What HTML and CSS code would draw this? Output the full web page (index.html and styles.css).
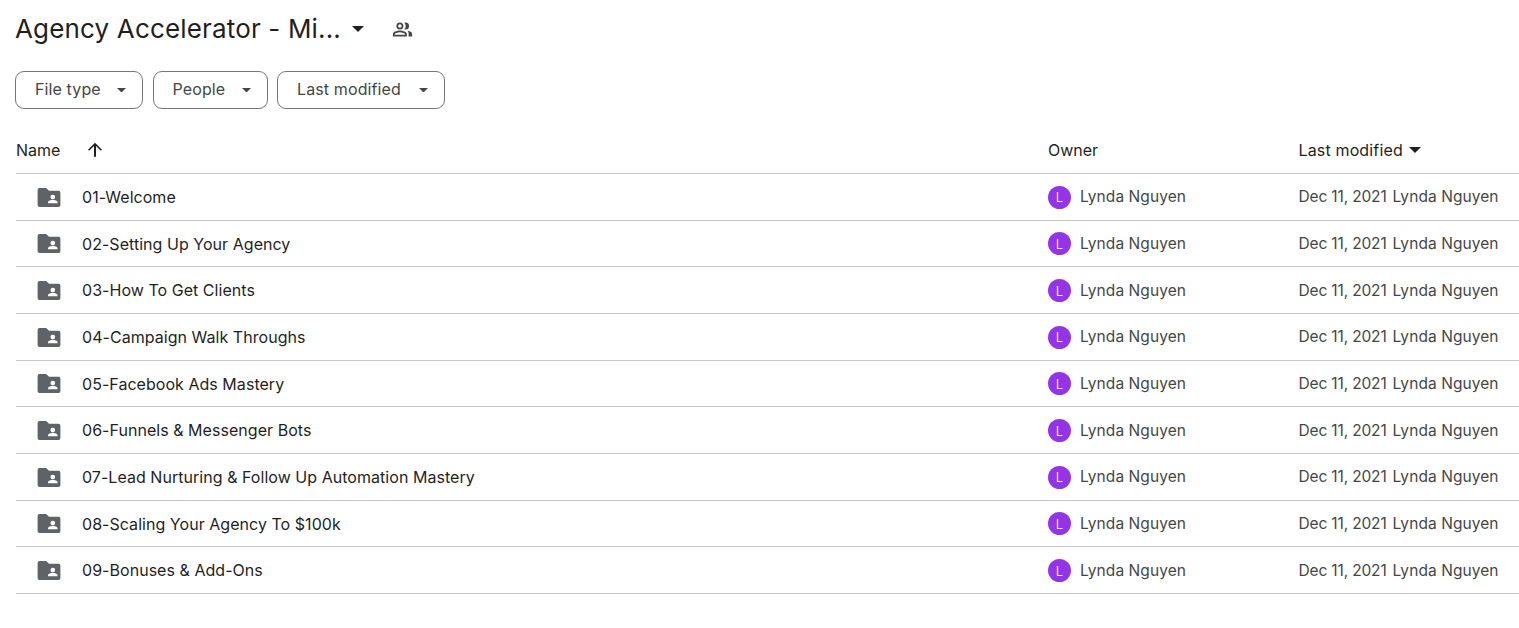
FILE: index.html
```html
<!DOCTYPE html>
<html lang="en">
<head>
<meta charset="utf-8">
<title>Agency Accelerator</title>
<link rel="stylesheet" href="styles.css">
</head>
<body>
<header class="title-bar">
  <h1 class="title">Agency Accelerator - Mi...</h1>
  <svg class="title-caret" viewBox="0 0 12 6"><path d="M0 0h12L6 6z"/></svg>
  <svg class="shared" viewBox="0 0 24 24"><path d="M9 12a4 4 0 1 0 0-8 4 4 0 0 0 0 8zm0-6a2 2 0 1 1 0 4 2 2 0 0 1 0-4zm0 7c-2.700 0-8 1.340-8 4v3h16v-3c0-2.660-5.300-4-8-4zm6 5H3v-1c.2-.72 3.300-2 6-2s5.800 1.280 6 2v1zm.5-6a4 4 0 0 0 0-8c-.47 0-.91.100-1.330.24a5.980 5.980 0 0 1 0 7.520c.42.140.860.240 1.330.240zm1.810 1.150C18.700 14.100 19 15.300 19 17v3h4v-3c0-2.100-3-3.400-5.690-3.850z"/></svg>
</header>
<div class="filters">
  <button class="chip chip-type"><span class="chip-label">File type</span><svg class="chip-caret" viewBox="0 0 10 5"><path d="M0 0h10L5 5z"/></svg></button>
  <button class="chip chip-people"><span class="chip-label">People</span><svg class="chip-caret" viewBox="0 0 10 5"><path d="M0 0h10L5 5z"/></svg></button>
  <button class="chip chip-mod"><span class="chip-label">Last modified</span><svg class="chip-caret" viewBox="0 0 10 5"><path d="M0 0h10L5 5z"/></svg></button>
</div>
<div class="table">
  <div class="row head">
    <div class="cell-name"><span class="head-name">Name</span><svg class="sort" viewBox="0 0 16 16"><path d="M8 1.500 1.800 7.700l1 1 4.300-4.300V14h1.800V4.400l4.300 4.300 1-1z"/></svg></div>
    <div class="cell-owner">Owner</div>
    <div class="cell-mod"><span class="head-mod">Last modified</span><svg class="head-caret" viewBox="0 0 12 6"><path d="M0 0h12L6 6z"/></svg></div>
  </div>
  <div class="row"><div class="cell-name"><svg class="folder" viewBox="0 0 24 20"><path d="M2 0h7l3 3h10a2 2 0 0 1 2 2v13a2 2 0 0 1-2 2H2a2 2 0 0 1-2-2V2a2 2 0 0 1 2-2zm14 7a2.500 2.500 0 1 0 0 5 2.500 2.500 0 0 0 0-5zm-5 9h10v-1c0-1.700-3.300-2.300-5-2.300s-5 .6-5 2.300z" fill-rule="evenodd"/></svg><span class="name">01-Welcome</span></div><div class="cell-owner"><span class="avatar">L</span><span class="person">Lynda Nguyen</span></div><div class="cell-mod"><span class="date">Dec 11, 2021</span><span class="person">Lynda Nguyen</span></div></div>
  <div class="row"><div class="cell-name"><svg class="folder" viewBox="0 0 24 20"><path d="M2 0h7l3 3h10a2 2 0 0 1 2 2v13a2 2 0 0 1-2 2H2a2 2 0 0 1-2-2V2a2 2 0 0 1 2-2zm14 7a2.500 2.500 0 1 0 0 5 2.500 2.500 0 0 0 0-5zm-5 9h10v-1c0-1.700-3.300-2.300-5-2.300s-5 .6-5 2.300z" fill-rule="evenodd"/></svg><span class="name">02-Setting Up Your Agency</span></div><div class="cell-owner"><span class="avatar">L</span><span class="person">Lynda Nguyen</span></div><div class="cell-mod"><span class="date">Dec 11, 2021</span><span class="person">Lynda Nguyen</span></div></div>
  <div class="row"><div class="cell-name"><svg class="folder" viewBox="0 0 24 20"><path d="M2 0h7l3 3h10a2 2 0 0 1 2 2v13a2 2 0 0 1-2 2H2a2 2 0 0 1-2-2V2a2 2 0 0 1 2-2zm14 7a2.500 2.500 0 1 0 0 5 2.500 2.500 0 0 0 0-5zm-5 9h10v-1c0-1.700-3.300-2.300-5-2.300s-5 .6-5 2.300z" fill-rule="evenodd"/></svg><span class="name">03-How To Get Clients</span></div><div class="cell-owner"><span class="avatar">L</span><span class="person">Lynda Nguyen</span></div><div class="cell-mod"><span class="date">Dec 11, 2021</span><span class="person">Lynda Nguyen</span></div></div>
  <div class="row"><div class="cell-name"><svg class="folder" viewBox="0 0 24 20"><path d="M2 0h7l3 3h10a2 2 0 0 1 2 2v13a2 2 0 0 1-2 2H2a2 2 0 0 1-2-2V2a2 2 0 0 1 2-2zm14 7a2.500 2.500 0 1 0 0 5 2.500 2.500 0 0 0 0-5zm-5 9h10v-1c0-1.700-3.300-2.300-5-2.300s-5 .6-5 2.300z" fill-rule="evenodd"/></svg><span class="name">04-Campaign Walk Throughs</span></div><div class="cell-owner"><span class="avatar">L</span><span class="person">Lynda Nguyen</span></div><div class="cell-mod"><span class="date">Dec 11, 2021</span><span class="person">Lynda Nguyen</span></div></div>
  <div class="row"><div class="cell-name"><svg class="folder" viewBox="0 0 24 20"><path d="M2 0h7l3 3h10a2 2 0 0 1 2 2v13a2 2 0 0 1-2 2H2a2 2 0 0 1-2-2V2a2 2 0 0 1 2-2zm14 7a2.500 2.500 0 1 0 0 5 2.500 2.500 0 0 0 0-5zm-5 9h10v-1c0-1.700-3.300-2.300-5-2.300s-5 .6-5 2.300z" fill-rule="evenodd"/></svg><span class="name">05-Facebook Ads Mastery</span></div><div class="cell-owner"><span class="avatar">L</span><span class="person">Lynda Nguyen</span></div><div class="cell-mod"><span class="date">Dec 11, 2021</span><span class="person">Lynda Nguyen</span></div></div>
  <div class="row"><div class="cell-name"><svg class="folder" viewBox="0 0 24 20"><path d="M2 0h7l3 3h10a2 2 0 0 1 2 2v13a2 2 0 0 1-2 2H2a2 2 0 0 1-2-2V2a2 2 0 0 1 2-2zm14 7a2.500 2.500 0 1 0 0 5 2.500 2.500 0 0 0 0-5zm-5 9h10v-1c0-1.700-3.300-2.300-5-2.300s-5 .6-5 2.300z" fill-rule="evenodd"/></svg><span class="name">06-Funnels &amp; Messenger Bots</span></div><div class="cell-owner"><span class="avatar">L</span><span class="person">Lynda Nguyen</span></div><div class="cell-mod"><span class="date">Dec 11, 2021</span><span class="person">Lynda Nguyen</span></div></div>
  <div class="row"><div class="cell-name"><svg class="folder" viewBox="0 0 24 20"><path d="M2 0h7l3 3h10a2 2 0 0 1 2 2v13a2 2 0 0 1-2 2H2a2 2 0 0 1-2-2V2a2 2 0 0 1 2-2zm14 7a2.500 2.500 0 1 0 0 5 2.500 2.500 0 0 0 0-5zm-5 9h10v-1c0-1.700-3.300-2.300-5-2.300s-5 .6-5 2.300z" fill-rule="evenodd"/></svg><span class="name">07-Lead Nurturing &amp; Follow Up Automation Mastery</span></div><div class="cell-owner"><span class="avatar">L</span><span class="person">Lynda Nguyen</span></div><div class="cell-mod"><span class="date">Dec 11, 2021</span><span class="person">Lynda Nguyen</span></div></div>
  <div class="row"><div class="cell-name"><svg class="folder" viewBox="0 0 24 20"><path d="M2 0h7l3 3h10a2 2 0 0 1 2 2v13a2 2 0 0 1-2 2H2a2 2 0 0 1-2-2V2a2 2 0 0 1 2-2zm14 7a2.500 2.500 0 1 0 0 5 2.500 2.500 0 0 0 0-5zm-5 9h10v-1c0-1.700-3.300-2.300-5-2.300s-5 .6-5 2.300z" fill-rule="evenodd"/></svg><span class="name">08-Scaling Your Agency To $100k</span></div><div class="cell-owner"><span class="avatar">L</span><span class="person">Lynda Nguyen</span></div><div class="cell-mod"><span class="date">Dec 11, 2021</span><span class="person">Lynda Nguyen</span></div></div>
  <div class="row"><div class="cell-name"><svg class="folder" viewBox="0 0 24 20"><path d="M2 0h7l3 3h10a2 2 0 0 1 2 2v13a2 2 0 0 1-2 2H2a2 2 0 0 1-2-2V2a2 2 0 0 1 2-2zm14 7a2.500 2.500 0 1 0 0 5 2.500 2.500 0 0 0 0-5zm-5 9h10v-1c0-1.700-3.300-2.300-5-2.300s-5 .6-5 2.300z" fill-rule="evenodd"/></svg><span class="name">09-Bonuses &amp; Add-Ons</span></div><div class="cell-owner"><span class="avatar">L</span><span class="person">Lynda Nguyen</span></div><div class="cell-mod"><span class="date">Dec 11, 2021</span><span class="person">Lynda Nguyen</span></div></div>
</div>
</body>
</html>
```
FILE: styles.css
```css
* { box-sizing: border-box; }
html, body { margin: 0; padding: 0; background: #fff; }
body {
  padding-left: 16px;
  font-family: Inter, "Noto Sans", sans-serif;
  color: #1f1f1f;
  overflow: hidden;
  height: 628px;
}
.title-bar { display: flex; align-items: center; height: 58px; margin-left: -1px; }
.title { margin: 0; font-size: 26px; font-weight: 400; line-height: 34px; letter-spacing: .16px; width: 337px; white-space: nowrap; color: #1f1f1f; }
.title-caret { width: 12px; height: 6px; fill: #1f1f1f; }
.shared { width: 21px; height: 21px; margin-left: 28px; fill: #444746; }
.filters { display: flex; gap: 9.500px; margin: 13px 0 0 -1px; }
.chip {
  display: flex; align-items: center; justify-content: space-between;
  height: 38px; padding: 0 16px 0 19px;
  border: 1px solid #747775; border-radius: 9px; background: #fff;
  font: 400 16px Inter, sans-serif; color: #444746;
}
.chip-label { margin-bottom: 2px; letter-spacing: .12px; }
.chip-type { width: 128px; }
.chip-people { width: 115px; }
.chip-mod { width: 168px; }
.chip-caret { width: 9px; height: 4.500px; fill: #444746; }
.table { margin-top: 18px; }
.row {
  display: grid; grid-template-columns: 1032px 250.500px 1fr;
  align-items: center; height: 46.67px;
  border-bottom: 1px solid #c7c7c7;
  font-size: 15.500px; color: #444746;
}
.row.head { height: 47px; color: #1f1f1f; font-size: 16px; }
.cell-name { display: flex; align-items: center; color: #1f1f1f; }
.name { font-size: 16px; letter-spacing: .04px; padding-top: .5px; }
.head-name { width: 71px; }
.sort { width: 18px; height: 18px; margin-left: -1px; fill: #1f1f1f; }
.folder { width: 24px; height: 19px; margin: 1px 21px 0 21px; fill: #5f6368; flex: none; }
.cell-owner { display: flex; align-items: center; gap: 9px; }
.cell-mod { display: flex; align-items: center; white-space: nowrap; }
.date { letter-spacing: -.15px; margin-right: 6px; }
.person { letter-spacing: .08px; }
.head .cell-owner, .head .cell-mod { color: #1f1f1f; }
.head-mod { letter-spacing: .15px; }
.head-caret { width: 12px; height: 6px; margin-left: 6px; fill: #1f1f1f; }
.avatar {
  width: 23px; height: 23px; border-radius: 50%; margin-top: 1px;
  background: #9334e6; color: #fff; font-size: 13px; font-weight: 300;
  display: flex; align-items: center; justify-content: center;
}
```
